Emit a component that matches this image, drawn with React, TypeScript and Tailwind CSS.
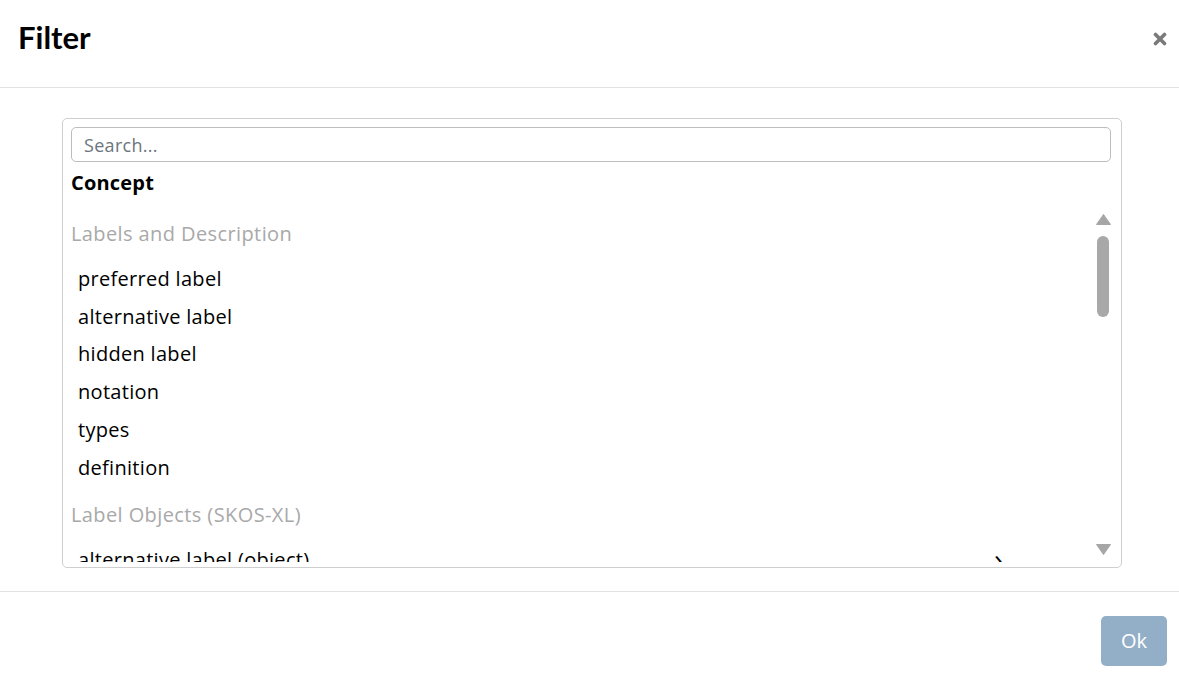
import React from 'react';

type Group = {
  title: string;
  items: { label: string; nested?: boolean }[];
};

const groups: Group[] = [
  {
    title: 'Labels and Description',
    items: [
      { label: 'preferred label' },
      { label: 'alternative label' },
      { label: 'hidden label' },
      { label: 'notation' },
      { label: 'types' },
      { label: 'definition' },
    ],
  },
  {
    title: 'Label Objects (SKOS-XL)',
    items: [{ label: 'alternative label (object)', nested: true }],
  },
];

function Scrollbar() {
  return (
    <div className="flex w-[16px] shrink-0 flex-col items-center pt-[8px] pb-[7px]">
      <svg width="15" height="11" viewBox="0 0 15 11" className="shrink-0">
        <path d="M7.5 0.5 L14.5 10.5 L0.5 10.5 Z" fill="#a6a6a6" strokeLinejoin="round" stroke="#a6a6a6" />
      </svg>
      <div className="mt-[11px] h-[81px] w-[12px] rounded-full bg-[#a8a8a8]" />
      <div className="flex-1" />
      <svg width="15" height="11" viewBox="0 0 15 11" className="shrink-0">
        <path d="M0.5 0.5 L14.5 0.5 L7.5 10.5 Z" fill="#a6a6a6" strokeLinejoin="round" stroke="#a6a6a6" />
      </svg>
    </div>
  );
}

export default function App() {
  return (
    <div className="flex h-[680px] w-[1179px] flex-col bg-white font-['Open_Sans',sans-serif] text-black">
      <div className="flex h-[88px] shrink-0 items-center justify-between border-b border-[#e2e2e2] pl-[18px] pr-[12px] pb-[12px]">
        <h1 className="font-['Lato',sans-serif] text-[31px] font-bold leading-none">Filter</h1>
        <button type="button" className="mt-[3px]">
          <svg width="14" height="14" viewBox="0 0 14 14">
            <path d="M2.5 2.5 L11.5 11.5 M11.5 2.5 L2.5 11.5" stroke="#7a7a7a" strokeWidth="3.6" strokeLinecap="round" />
          </svg>
        </button>
      </div>

      <div className="flex flex-1 flex-col pl-[62px] pr-[57px] pt-[30px] pb-[23px]">
        <div className="flex h-[450px] flex-col rounded-[5px] border border-[#cfcfcf] pl-[8px] pr-[10px] pt-[8px] pb-[5px]">
          <input
            type="text"
            placeholder="Search..."
            className="h-[35px] w-full shrink-0 rounded-[5px] border border-[#bdbdbd] px-[12px] text-[18px] tracking-[0.3px] text-black placeholder:text-[#6c757d] focus:outline-none"
          />
          <div className="mt-[9px] text-[20px] font-bold leading-[24px] tracking-[0.2px]">Concept</div>
          <div className="mt-[11px] flex min-h-0 flex-1 overflow-hidden">
            <div className="min-w-0 flex-1 overflow-hidden">
              {groups.map(group => (
                <div key={group.title}>
                  <div className="pt-[16px] pb-[14px] text-[20px] leading-[24px] tracking-[0.4px] text-[#a9a9a9]">
                    {group.title}
                  </div>
                  {group.items.map(item => (
                    <div
                      key={item.label}
                      className="flex h-[37.8px] items-center justify-between pl-[7px] pr-[92px] text-[20px] leading-[24px] tracking-[0.3px]"
                    >
                      <span>{item.label}</span>
                      {item.nested ? <span className="-mt-[4px] text-[28px] leading-none">›</span> : null}
                    </div>
                  ))}
                </div>
              ))}
            </div>
            <Scrollbar />
          </div>
        </div>
      </div>

      <div className="flex h-[89px] shrink-0 items-center justify-end border-t border-[#e2e2e2] pr-[12px] pt-[10px]">
        <button type="button" className="h-[50px] w-[66px] rounded-[5px] bg-[#93afc7] text-[20px] text-white">
          Ok
        </button>
      </div>
    </div>
  );
}
